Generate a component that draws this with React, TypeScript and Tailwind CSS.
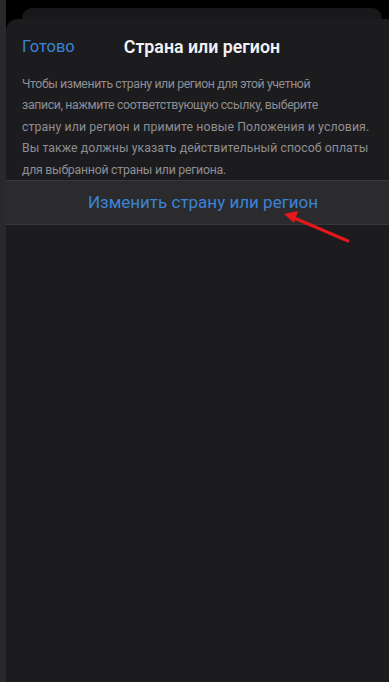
import React from "react";

const font = { fontFamily: 'Roboto, "Noto Sans", sans-serif' };

// per-line tracking keeps each line the width it has in the original
const lines = [
  { text: "Чтобы изменить страну или регион для этой учетной", cls: "tracking-[-0.4px]" },
  { text: "записи, нажмите соответствующую ссылку, выберите", cls: "tracking-[-0.35px]" },
  { text: "страну или регион и примите новые Положения и условия.", cls: "tracking-[0.1px]" },
  { text: "Вы также должны указать действительный способ оплаты", cls: "tracking-[0.05px]" },
  { text: "для выбранной страны или региона.", cls: "tracking-[-0.25px]" },
];

export default function App() {
  return (
    <div
      className="relative flex h-[682px] w-[389px] overflow-hidden bg-black"
      style={font}
    >
      {/* left edge of the page underneath */}
      <div className="w-[6px] shrink-0 bg-[#29292b]" />

      <div className="relative mr-[-11px] flex min-w-0 flex-1 flex-col pt-[19px]">
        {/* stacked card behind the sheet */}
        <div className="absolute left-[16px] right-[18px] top-[8px] h-[30px] rounded-[10px] bg-[#18181a]" />

        <div className="relative flex flex-1 flex-col rounded-t-[12px] bg-[#1c1c1e]">
          <div className="flex h-[55px] items-center px-[16px] pt-[1px]">
            <span className="text-[16.5px] text-[#3b83d4]">Готово</span>
            <span className="ml-[49px] text-[17.8px] font-semibold text-[#f2f2f4]">
              Страна или регион
            </span>
          </div>

          <p className="whitespace-nowrap px-[16px] text-[12.3px] leading-[21.4px] text-[#8e8e93]">
            {lines.map((l, i) => (
              <span key={i} className={`block ${l.cls}`}>
                {l.text}
              </span>
            ))}
          </p>

          <div className="mt-[-1px] flex h-[45px] items-center justify-center border-y border-[#38383a] bg-[#2b2b2d]">
            <span className="text-[17px] text-[#3b83d4]">
              Изменить страну или регион
            </span>
          </div>
        </div>
      </div>

      {/* red annotation arrow */}
      <svg
        className="absolute left-[278px] top-[208px]"
        width="76"
        height="40"
        viewBox="0 0 76 40"
      >
        <line
          x1="70"
          y1="33"
          x2="14"
          y2="9"
          stroke="#e3171c"
          strokeWidth="3"
          strokeLinecap="round"
        />
        <polygon points="6,6 20,3 16,15" fill="#e3171c" />
      </svg>
    </div>
  );
}
